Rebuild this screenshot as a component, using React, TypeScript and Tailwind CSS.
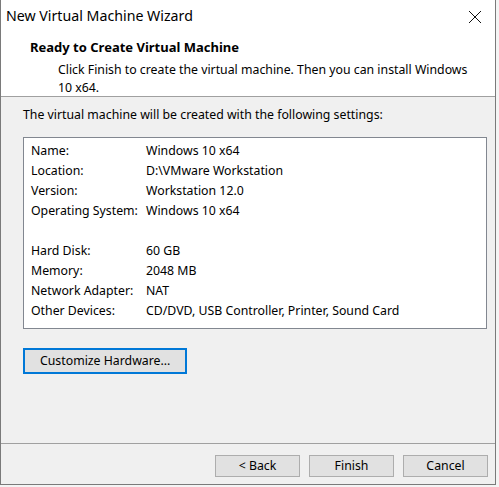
import React from "react";

const rows1: [string, string][] = [
  ["Name:", "Windows 10 x64"],
  ["Location:", "D:\\VMware Workstation"],
  ["Version:", "Workstation 12.0"],
  ["Operating System:", "Windows 10 x64"],
];
const rows2: [string, string][] = [
  ["Hard Disk:", "60 GB"],
  ["Memory:", "2048 MB"],
  ["Network Adapter:", "NAT"],
  ["Other Devices:", "CD/DVD, USB Controller, Printer, Sound Card"],
];

function Row({ k, v }: { k: string; v: string }) {
  return (
    <div className="flex h-[20px] items-center">
      <div className="w-[115px] shrink-0">{k}</div>
      <div>{v}</div>
    </div>
  );
}

export default function App() {
  return (
    <div
      className="w-[499px] h-[487px] bg-[#f4f4f4] text-[12.3px] text-[#000] leading-none"
      style={{ fontFamily: '"Noto Sans", sans-serif' }}
    >
      <div className="w-[496px] h-[485px] border-l border-r border-b border-[#7a7a7a] flex flex-col bg-[#f0f0f0]">
        {/* Title bar */}
        <div className="h-[33px] bg-white flex items-center justify-between pl-[5px] pr-[10px]">
          <span className="text-[14.2px] text-[#000]">New Virtual Machine Wizard</span>
          <svg width="16" height="16" viewBox="0 0 16 16" className="mr-[2px]">
            <path d="M2 2 L14 14 M14 2 L2 14" stroke="#111" strokeWidth="1" fill="none" />
          </svg>
        </div>
        {/* Header */}
        <div className="h-[64px] bg-white border-b border-[#a0a0a0] pl-[29px] pt-[8px]">
          <div className="font-bold text-[13px]">Ready to Create Virtual Machine</div>
          <div className="pl-[28px] pt-[7px] leading-[18px] w-[450px]">
            Click Finish to create the virtual machine. Then you can install Windows
            <br />
            10 x64.
          </div>
        </div>
        {/* Body */}
        <div className="flex-1 flex flex-col pl-[22px] pr-[10px]">
          <div className="pt-[12px] h-[40px]">The virtual machine will be created with the following settings:</div>
          <div className="w-[464px] h-[192px] bg-white border border-[#828790] pl-[7px] pt-[3px]">
            {rows1.map(([k, v]) => (
              <Row key={k} k={k} v={v} />
            ))}
            <div className="h-[20px]" />
            {rows2.map(([k, v]) => (
              <Row key={k} k={k} v={v} />
            ))}
          </div>
          <div className="pt-[19px]">
            <button className="w-[164px] h-[26px] bg-[#e1e1e1] border-2 border-[#0078d7] text-left pl-[15px] text-[12.3px]">
              Customize Hardware...
            </button>
          </div>
        </div>
        {/* Footer */}
        <div className="h-[41px] border-t border-[#a0a0a0] flex justify-end items-start gap-[9px] pr-[7px] pt-[11px]">
          {["< Back", "Finish", "Cancel"].map((t) => (
            <button
              key={t}
              className="w-[85px] h-[22px] bg-[#e1e1e1] border border-[#adadad] text-[12.3px]"
            >
              {t}
            </button>
          ))}
        </div>
      </div>
    </div>
  );
}
